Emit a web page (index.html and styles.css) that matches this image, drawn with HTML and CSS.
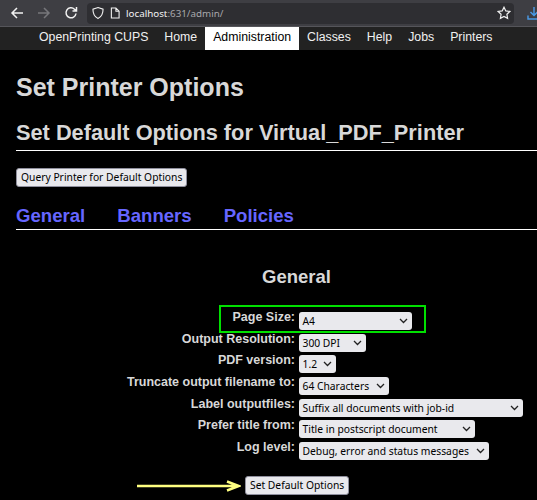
FILE: index.html
```html
<!DOCTYPE html>
<html lang="en">
<head>
    <meta charset="UTF-8">
    <title>Set Printer Options</title>
    <link rel="stylesheet" href="styles.css">
</head>
<body>
    <div class="toolbar">
        <svg class="tool" width="14" height="14" viewBox="0 0 14 14"><path d="M13 7H2M7 2L2 7l5 5" fill="none" stroke="#f2f2f2" stroke-width="1.5"/></svg>
        <svg class="tool" width="14" height="14" viewBox="0 0 14 14"><path d="M1 7h11M7 2l5 5-5 5" fill="none" stroke="#77777b" stroke-width="1.5"/></svg>
        <svg class="tool" width="14" height="14" viewBox="0 0 14 14"><path d="M12 7.500A5 5 0 1 1 10.500 3.200L12.500 5M12.500 1v4h-4" fill="none" stroke="#f2f2f2" stroke-width="1.500"/></svg>
        <div class="urlbar">
            <svg width="12" height="14" viewBox="0 0 13 14"><path d="M6.500 1L12 2.800C12 8 10 11.500 6.500 13 3 11.500 1 8 1 2.800z" fill="none" stroke="#f2f2f2" stroke-width="1.200"/></svg>
            <svg width="10" height="12" viewBox="0 0 11 13"><path d="M1.500 1h5L10 4.500V12H1.500zM6.500 1v3.500H10" fill="none" stroke="#f2f2f2" stroke-width="1.200"/></svg>
            <span class="url"><b>localhost</b>:631/admin/</span>
            <svg class="star" width="14" height="14" viewBox="0 0 14 14"><path d="M7 1.200l1.800 3.700 4 .6-2.900 2.800.7 4L7 10.400l-3.600 1.900.7-4L1.200 5.500l4-.6z" fill="none" stroke="#f2f2f2" stroke-width="1.200"/></svg>
        </div>
        <svg class="download" width="14" height="14" viewBox="0 0 14 14"><path d="M7 1v8M3.500 6L7 9.500 10.500 6M1 9.500V13h12V9.500" fill="none" stroke="#4a9be8" stroke-width="1.400"/></svg>
    </div>

    <ul class="nav">
        <li>OpenPrinting CUPS</li>
        <li>Home</li>
        <li class="active">Administration</li>
        <li>Classes</li>
        <li>Help</li>
        <li>Jobs</li>
        <li>Printers</li>
    </ul>

    <div class="content">
        <h1>Set Printer Options</h1>
        <h2>Set Default Options for Virtual_PDF_Printer</h2>
        <button class="btn">Query Printer for Default Options</button>

        <div class="tabs">
            <a>General</a>
            <a>Banners</a>
            <a>Policies</a>
        </div>

        <h3>General</h3>

        <div class="options">
            <div class="opt-label">Page Size:</div>
            <div class="select w-size"><span>A4</span><svg width="9" height="6" viewBox="0 0 9 6"><path d="M1 1l3.500 3.500L8 1" fill="none" stroke="#222" stroke-width="1.300"/></svg></div>
            <div class="opt-label">Output Resolution:</div>
            <div class="select w-res"><span>300 DPI</span><svg width="9" height="6" viewBox="0 0 9 6"><path d="M1 1l3.500 3.500L8 1" fill="none" stroke="#222" stroke-width="1.300"/></svg></div>
            <div class="opt-label">PDF version:</div>
            <div class="select w-pdf"><span>1.2</span><svg width="9" height="6" viewBox="0 0 9 6"><path d="M1 1l3.500 3.500L8 1" fill="none" stroke="#222" stroke-width="1.300"/></svg></div>
            <div class="opt-label">Truncate output filename to:</div>
            <div class="select w-trunc"><span>64 Characters</span><svg width="9" height="6" viewBox="0 0 9 6"><path d="M1 1l3.500 3.500L8 1" fill="none" stroke="#222" stroke-width="1.300"/></svg></div>
            <div class="opt-label">Label outputfiles:</div>
            <div class="select w-label"><span>Suffix all documents with job-id</span><svg width="9" height="6" viewBox="0 0 9 6"><path d="M1 1l3.500 3.500L8 1" fill="none" stroke="#222" stroke-width="1.300"/></svg></div>
            <div class="opt-label">Prefer title from:</div>
            <div class="select w-title"><span>Title in postscript document</span><svg width="9" height="6" viewBox="0 0 9 6"><path d="M1 1l3.500 3.500L8 1" fill="none" stroke="#222" stroke-width="1.300"/></svg></div>
            <div class="opt-label">Log level:</div>
            <div class="select w-log"><span>Debug, error and status messages</span><svg width="9" height="6" viewBox="0 0 9 6"><path d="M1 1l3.500 3.500L8 1" fill="none" stroke="#222" stroke-width="1.300"/></svg></div>
        </div>

        <div class="submit-row">
            <svg class="arrow" width="105" height="12" viewBox="0 0 105 12"><path d="M1 6h101M91 1.500L103 6 91 10.500" fill="none" stroke="#ffff80" stroke-width="2.500"/></svg>
            <button class="btn">Set Default Options</button>
        </div>

        <div class="highlight-box"></div>
    </div>
</body>
</html>
```

FILE: styles.css
```css
html, body {
    margin: 0;
    height: 500px;
    overflow: hidden;
    background-color: #000;
}

body {
    font-family: "Liberation Sans", Arial, sans-serif;
}

.toolbar {
    display: flex;
    align-items: center;
    gap: 13px;
    height: 27px;
    background-color: #3e3e43;
    border-bottom: 1px solid #55555a;
    box-sizing: border-box;
    padding-left: 10px;
}

.tool {
    flex: none;
}

.urlbar {
    display: flex;
    align-items: center;
    gap: 6px;
    flex: none;
    width: 427px;
    height: 21px;
    margin-left: -4px;
    padding-left: 5px;
    box-sizing: border-box;
    background-color: #2e2e32;
    border-radius: 4px;
}

.url {
    font-family: "Noto Sans", sans-serif;
    font-size: 9.8px;
    color: #a8a8ac;
}

.url b {
    font-weight: normal;
    color: #f2f2f2;
}

.star {
    margin-left: auto;
    margin-right: 3px;
}

.download {
    flex: none;
}

.nav {
    display: flex;
    list-style: none;
    margin: 0;
    padding: 0 0 0 31px;
    height: 23px;
    background-color: #222;
    color: #f0f0f0;
    font-size: 12.3px;
}

.nav li {
    padding: 3px 8px 0;
}

.nav .active {
    background-color: #fff;
    color: #000;
}

.content {
    position: relative;
    padding: 22px 0 0 16px;
    color: #d8d8d8;
}

h1 {
    font-size: 25px;
    line-height: 30px;
    margin: 0;
}

h2 {
    font-size: 21.75px;
    line-height: 26px;
    margin: 18px 0 0;
    padding-bottom: 4px;
    border-bottom: 1px solid #fff;
}

.btn {
    display: block;
    font-family: "Noto Sans", sans-serif;
    font-size: 10.3px;
    line-height: 15px;
    color: #000;
    background-color: #e9e9ed;
    border: 1px solid #8f8f9d;
    border-radius: 3px;
    padding: 1px 4px;
    margin: 0;
}

.content > .btn {
    margin-top: 17px;
}

.tabs {
    display: flex;
    gap: 32px;
    margin-top: 18px;
    padding-bottom: 3px;
    border-bottom: 1px solid #fff;
    font-size: 18.6px;
    line-height: 21px;
    font-weight: bold;
    color: #6666ff;
}

h3 {
    font-size: 18.5px;
    line-height: 22px;
    text-align: center;
    margin: 36px 0 0;
    padding-left: 40px;
}

.options {
    display: grid;
    grid-template-columns: 279px auto;
    justify-content: start;
    justify-items: start;
    row-gap: 3.7px;
    column-gap: 3.5px;
    margin-top: 24px;
}

.opt-label {
    justify-self: end;
    margin-top: -3px;
    font-size: 12.5px;
    font-weight: bold;
    line-height: 16px;
}

.select {
    display: flex;
    align-items: center;
    justify-content: space-between;
    height: 18px;
    box-sizing: border-box;
    padding: 0 4px;
    font-family: "Noto Sans", sans-serif;
    font-size: 10.3px;
    color: #000;
    background-color: #e9e9ed;
    border-radius: 3px;
    white-space: nowrap;
}

.w-size {
    width: 113px;
}

.w-res {
    width: 67px;
}

.w-pdf {
    width: 37px;
}

.w-trunc {
    width: 90px;
}

.w-label {
    width: 224px;
}

.w-title {
    width: 176px;
}

.w-log {
    width: 190px;
}

.submit-row {
    display: flex;
    align-items: center;
    gap: 4px;
    margin: 16px 0 0 120px;
}

.highlight-box {
    position: absolute;
    left: 219px;
    top: 255px;
    width: 203px;
    height: 24px;
    border: 2px solid #00e000;
}
```
